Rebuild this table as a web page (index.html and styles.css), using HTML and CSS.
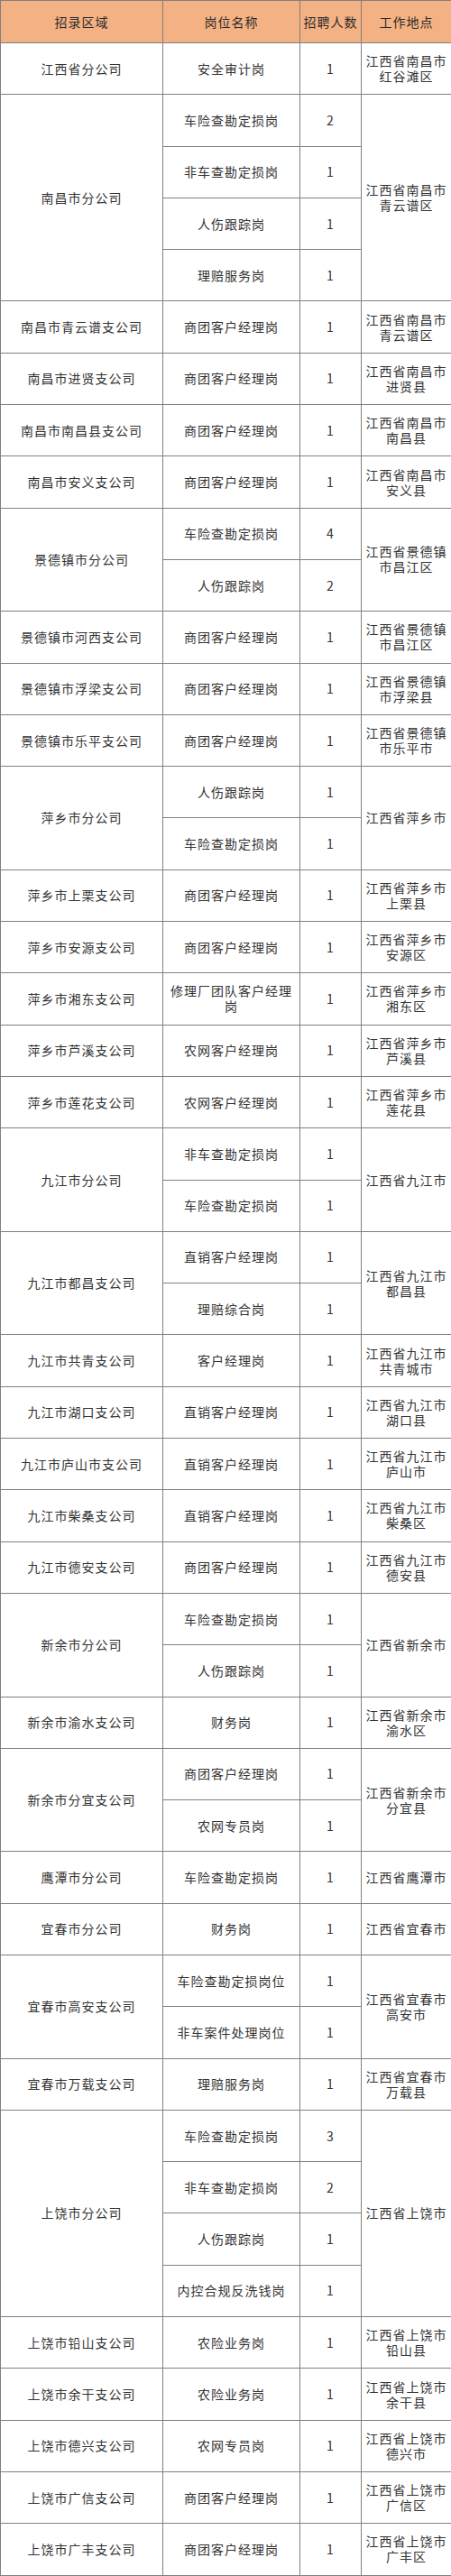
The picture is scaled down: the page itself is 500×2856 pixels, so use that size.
FILE: index.html
```html
<!DOCTYPE html>
<html lang="zh-CN">
<head>
<meta charset="utf-8">
<title>招录岗位表</title>
<link rel="stylesheet" href="styles.css">
</head>
<body>
<table class="jobs">
  <colgroup>
    <col class="c-area">
    <col class="c-post">
    <col class="c-num">
    <col class="c-loc">
  </colgroup>
  <thead>
    <tr><th>招录区域</th><th>岗位名称</th><th>招聘人数</th><th>工作地点</th></tr>
  </thead>
  <tbody>
    <tr><td>江西省分公司</td><td>安全审计岗</td><td>1</td><td>江西省南昌市红谷滩区</td></tr>

    <tr><td rowspan="4">南昌市分公司</td><td>车险查勘定损岗</td><td>2</td><td rowspan="4">江西省南昌市青云谱区</td></tr>
    <tr><td>非车查勘定损岗</td><td>1</td></tr>
    <tr><td>人伤跟踪岗</td><td>1</td></tr>
    <tr><td>理赔服务岗</td><td>1</td></tr>

    <tr><td>南昌市青云谱支公司</td><td>商团客户经理岗</td><td>1</td><td>江西省南昌市青云谱区</td></tr>
    <tr><td>南昌市进贤支公司</td><td>商团客户经理岗</td><td>1</td><td>江西省南昌市进贤县</td></tr>
    <tr><td>南昌市南昌县支公司</td><td>商团客户经理岗</td><td>1</td><td>江西省南昌市南昌县</td></tr>
    <tr><td>南昌市安义支公司</td><td>商团客户经理岗</td><td>1</td><td>江西省南昌市安义县</td></tr>

    <tr><td rowspan="2">景德镇市分公司</td><td>车险查勘定损岗</td><td>4</td><td rowspan="2">江西省景德镇市昌江区</td></tr>
    <tr><td>人伤跟踪岗</td><td>2</td></tr>

    <tr><td>景德镇市河西支公司</td><td>商团客户经理岗</td><td>1</td><td>江西省景德镇市昌江区</td></tr>
    <tr><td>景德镇市浮梁支公司</td><td>商团客户经理岗</td><td>1</td><td>江西省景德镇市浮梁县</td></tr>
    <tr><td>景德镇市乐平支公司</td><td>商团客户经理岗</td><td>1</td><td>江西省景德镇市乐平市</td></tr>

    <tr><td rowspan="2">萍乡市分公司</td><td>人伤跟踪岗</td><td>1</td><td rowspan="2">江西省萍乡市</td></tr>
    <tr><td>车险查勘定损岗</td><td>1</td></tr>

    <tr><td>萍乡市上栗支公司</td><td>商团客户经理岗</td><td>1</td><td>江西省萍乡市上栗县</td></tr>
    <tr><td>萍乡市安源支公司</td><td>商团客户经理岗</td><td>1</td><td>江西省萍乡市安源区</td></tr>
    <tr><td>萍乡市湘东支公司</td><td>修理厂团队客户经理岗</td><td>1</td><td>江西省萍乡市湘东区</td></tr>
    <tr><td>萍乡市芦溪支公司</td><td>农网客户经理岗</td><td>1</td><td>江西省萍乡市芦溪县</td></tr>
    <tr><td>萍乡市莲花支公司</td><td>农网客户经理岗</td><td>1</td><td>江西省萍乡市莲花县</td></tr>

    <tr><td rowspan="2">九江市分公司</td><td>非车查勘定损岗</td><td>1</td><td rowspan="2">江西省九江市</td></tr>
    <tr><td>车险查勘定损岗</td><td>1</td></tr>

    <tr><td rowspan="2">九江市都昌支公司</td><td>直销客户经理岗</td><td>1</td><td rowspan="2">江西省九江市都昌县</td></tr>
    <tr><td>理赔综合岗</td><td>1</td></tr>

    <tr><td>九江市共青支公司</td><td>客户经理岗</td><td>1</td><td>江西省九江市共青城市</td></tr>
    <tr><td>九江市湖口支公司</td><td>直销客户经理岗</td><td>1</td><td>江西省九江市湖口县</td></tr>
    <tr><td>九江市庐山市支公司</td><td>直销客户经理岗</td><td>1</td><td>江西省九江市庐山市</td></tr>
    <tr><td>九江市柴桑支公司</td><td>直销客户经理岗</td><td>1</td><td>江西省九江市柴桑区</td></tr>
    <tr><td>九江市德安支公司</td><td>商团客户经理岗</td><td>1</td><td>江西省九江市德安县</td></tr>

    <tr><td rowspan="2">新余市分公司</td><td>车险查勘定损岗</td><td>1</td><td rowspan="2">江西省新余市</td></tr>
    <tr><td>人伤跟踪岗</td><td>1</td></tr>

    <tr><td>新余市渝水支公司</td><td>财务岗</td><td>1</td><td>江西省新余市渝水区</td></tr>

    <tr><td rowspan="2">新余市分宜支公司</td><td>商团客户经理岗</td><td>1</td><td rowspan="2">江西省新余市分宜县</td></tr>
    <tr><td>农网专员岗</td><td>1</td></tr>

    <tr><td>鹰潭市分公司</td><td>车险查勘定损岗</td><td>1</td><td>江西省鹰潭市</td></tr>
    <tr><td>宜春市分公司</td><td>财务岗</td><td>1</td><td>江西省宜春市</td></tr>

    <tr><td rowspan="2">宜春市高安支公司</td><td>车险查勘定损岗位</td><td>1</td><td rowspan="2">江西省宜春市高安市</td></tr>
    <tr><td>非车案件处理岗位</td><td>1</td></tr>

    <tr><td>宜春市万载支公司</td><td>理赔服务岗</td><td>1</td><td>江西省宜春市万载县</td></tr>

    <tr><td rowspan="4">上饶市分公司</td><td>车险查勘定损岗</td><td>3</td><td rowspan="4">江西省上饶市</td></tr>
    <tr><td>非车查勘定损岗</td><td>2</td></tr>
    <tr><td>人伤跟踪岗</td><td>1</td></tr>
    <tr><td>内控合规反洗钱岗</td><td>1</td></tr>

    <tr><td>上饶市铅山支公司</td><td>农险业务岗</td><td>1</td><td>江西省上饶市铅山县</td></tr>
    <tr><td>上饶市余干支公司</td><td>农险业务岗</td><td>1</td><td>江西省上饶市余干县</td></tr>
    <tr><td>上饶市德兴支公司</td><td>农网专员岗</td><td>1</td><td>江西省上饶市德兴市</td></tr>
    <tr><td>上饶市广信支公司</td><td>商团客户经理岗</td><td>1</td><td>江西省上饶市广信区</td></tr>
    <tr><td>上饶市广丰支公司</td><td>商团客户经理岗</td><td>1</td><td>江西省上饶市广丰区</td></tr>
  </tbody>
</table>
</body>
</html>
```

FILE: styles.css
```css
html, body {
  margin: 0;
  padding: 0;
  background: #ffffff;
}

.jobs {
  width: 500px;
  border-collapse: collapse;
  table-layout: fixed;
  font-family: "Noto Sans CJK SC", "Noto Sans", sans-serif;
  font-size: 14px;
  letter-spacing: 1px;
  color: #333333;
}

.c-area { width: 180px; }
.c-post { width: 152px; }
.c-num  { width: 68px; }
.c-loc  { width: 100px; }

.jobs th,
.jobs td {
  border: 1px solid #808080;
  text-align: center;
  vertical-align: middle;
  padding: 0 3px;
  line-height: 17px;
}

.jobs thead tr {
  height: 47px;
}

.jobs th {
  background: #f4b183;
  font-weight: normal;
  color: #2b2b2b;
  white-space: nowrap;
  padding: 0;
}

.jobs tbody tr {
  height: 57.3px;
}
```
